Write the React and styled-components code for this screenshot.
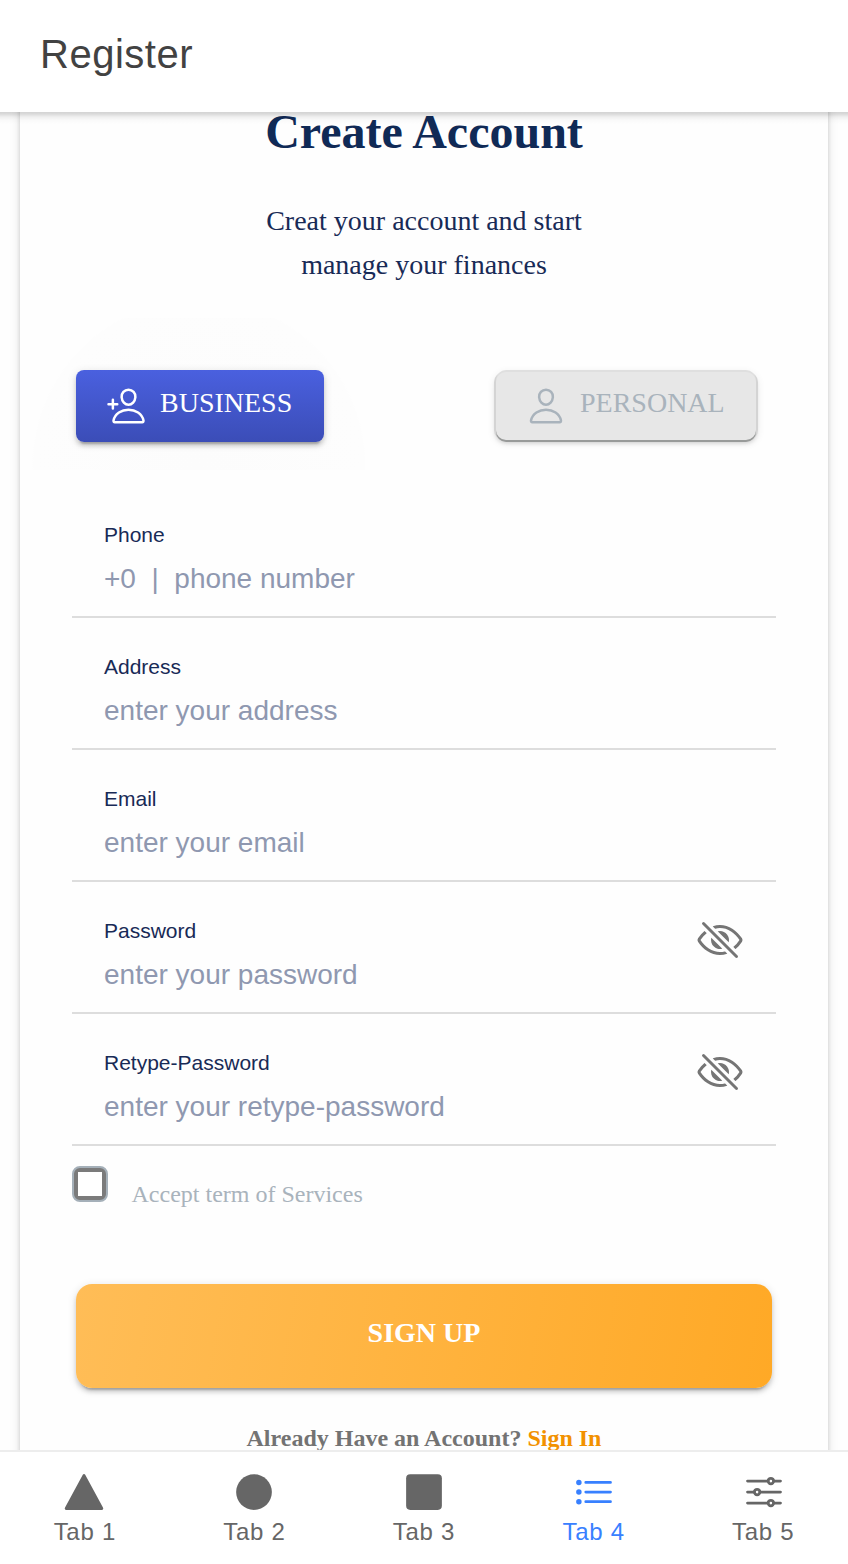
import React from 'react';
import styled, { createGlobalStyle } from 'styled-components';
import {
  IoPersonAddOutline, IoPersonOutline, IoEyeOffOutline, IoTriangle,
  IoEllipse, IoSquare, IoListOutline, IoOptionsOutline,
} from 'react-icons/io5';

const Global = createGlobalStyle`
  *, *::before, *::after { box-sizing: border-box; }
  html, body { margin: 0; padding: 0; background: #fff; }
`;

const sans = `"Liberation Sans", Arial, sans-serif`;
const serif = `"Liberation Serif", "Times New Roman", serif`;
const raised = `0 6px 2px -4px rgba(0,0,0,.2), 0 4px 4px 0 rgba(0,0,0,.14), 0 2px 10px 0 rgba(0,0,0,.12)`;
const edged = `0 -2px 0 0 #dfdfdf, 0 2px 0 0 #989a99, 2px 0 0 0 #d4d4d4, -2px 0 0 0 #d4d4d4, 0 3px 4px 0 rgba(0,0,0,.14), 0 2px 10px 0 rgba(0,0,0,.12)`;

const Page = styled.div`
  display: flex;
  flex-direction: column;
  width: 848px;
  height: 1564px;
  overflow: hidden;
  background: #fff;
  font-family: ${sans};
`;

const Header = styled.header`
  flex: none;
  display: flex;
  align-items: center;
  height: 112px;
  padding: 0 40px 4px;
  background: #fff;
`;

const Title = styled.h1`
  margin: 0;
  font-size: 40px;
  font-weight: 400;
  letter-spacing: 0.5px;
  color: #424242;
`;

const Content = styled.main`
  flex: 1;
  min-height: 0;
  overflow: hidden;
  background: #fefefe;
  position: relative;
  &::before {
    content: '';
    position: absolute;
    z-index: 1;
    top: 0;
    left: 0;
    right: 0;
    height: 12px;
    background: linear-gradient(rgba(0,0,0,.17), rgba(0,0,0,.14) 2px, rgba(0,0,0,.06) 5px, rgba(0,0,0,.02) 8px, transparent);
  }
`;

const Card = styled.section`
  height: 1500px;
  margin: -20px 20px 0;
  padding: 12px 52px 0;
  background: #fefefe;
  box-shadow: ${raised};
`;

const Heading = styled.h2`
  margin: 0;
  font: bold 48px/56px ${serif};
  text-align: center;
  color: #102a56;
`;

const Intro = styled.p`
  margin: 39px 0 0;
  font: 28px/44px ${serif};
  text-align: center;
  color: #182a56;
`;

const AccountTypes = styled.div`
  display: flex;
  justify-content: space-between;
  align-items: center;
  height: 152px;
  margin: 31px -52px 0;
  padding: 24px 72px 0 56px;
  background: radial-gradient(circle 167px at 179px 148px, #fcfcfc 0, #fdfdfd 99%, transparent 100%);
`;

const TypeButton = styled.button`
  display: flex;
  align-items: center;
  width: ${p => (p.$active ? 248 : 260)}px;
  height: ${p => (p.$active ? 72 : 68)}px;
  padding: 0 0 0 30px;
  border: 0;
  border-radius: ${p => (p.$active ? 8 : 10)}px;
  background: ${p => (p.$active ? 'linear-gradient(#4a60df, #3b4db7)' : '#e7e7e7')};
  box-shadow: ${p => (p.$active ? raised : edged)};
  color: ${p => (p.$active ? '#fff' : '#a9b3bc')};
  font: 28px/32px ${serif};

  svg {
    flex: none;
    width: 40px;
    height: 40px;
    margin-right: 14px;
  }
  span { margin-top: -6px; }
`;

const Field = styled.label`
  display: flex;
  align-items: flex-start;
  justify-content: space-between;
  height: 132px;
  padding: 36px 32px 0;
  border-bottom: 2px solid #dddddd;
  svg {
    width: 48px;
    height: 48px;
    color: #757575;
    margin-top: -2px;
  }
`;

const FieldText = styled.div`
  display: flex;
  flex-direction: column;
  flex: 1;
`;

const FieldName = styled.span`
  font-size: 21px;
  line-height: 26px;
  color: #182a56;
`;

const Input = styled.input`
  width: 100%;
  height: 36px;
  margin-top: 13px;
  padding: 0;
  border: 0;
  outline: 0;
  background: transparent;
  font: 28px/36px ${sans};
  &::placeholder { color: #8f98b0; opacity: 1; }
`;

const Fields = styled.div`
  padding-top: 16px;
`;

const Terms = styled.label`
  display: flex;
  align-items: flex-start;
  height: 138px;
  padding-top: 20px;
  font: 24px/28px ${serif};
  color: #a9b3bc;
  span { margin: 14px 0 0 23.5px; }
`;

const Checkbox = styled.i`
  width: 36px;
  height: 36px;
  border: 2px solid #a5b0b9;
  border-radius: 8px;
  background: #7b7b7b;
  padding: 4px;
  &::before {
    content: '';
    display: block;
    height: 24px;
    background: #fff;
  }
`;

const SignUp = styled.button`
  display: block;
  width: 696px;
  height: 104px;
  margin: 0 4px;
  padding: 0 0 7px;
  border: 0;
  border-radius: 16px;
  background: linear-gradient(100deg, #ffbd57, #ffa926);
  box-shadow: ${raised};
  color: #fff;
  font: bold 28px/32px ${serif};
`;

const Existing = styled.p`
  margin: 36px 0 0;
  font: bold 24px/28px ${serif};
  text-align: center;
  color: #737373;
  a { color: #f29100; }
`;

const TabBar = styled.nav`
  flex: none;
  display: flex;
  height: 114px;
  border-top: 2px solid #ededed;
  background: #fff;
`;

const Tab = styled.a`
  flex: 1;
  display: flex;
  flex-direction: column;
  align-items: center;
  padding-top: 18px;
  font-size: 24px;
  line-height: 28px;
  letter-spacing: 0.72px;
  color: ${p => (p.$active ? '#3880ff' : '#666')};
  svg {
    width: 44px;
    height: 44px;
    margin-bottom: 4px;
  }
  &:first-child svg { margin-left: -2px; }
  &:last-child svg { margin-right: -2px; }
`;

const fields = [
  { name: 'Phone', hint: '+0  |  phone number' },
  { name: 'Address', hint: 'enter your address' },
  { name: 'Email', hint: 'enter your email' },
  { name: 'Password', hint: 'enter your password', secret: true },
  { name: 'Retype-Password', hint: 'enter your retype-password', secret: true },
];

const tabs = [IoTriangle, IoEllipse, IoSquare, IoListOutline, IoOptionsOutline];

export default function App() {
  return (
    <Page>
      <Global />
      <Header><Title>Register</Title></Header>
      <Content>
        <Card>
          <Heading>Create Account</Heading>
          <Intro>Creat your account and start<br />manage your finances</Intro>
          <AccountTypes>
            <TypeButton $active><IoPersonAddOutline /><span>BUSINESS</span></TypeButton>
            <TypeButton><IoPersonOutline /><span>PERSONAL</span></TypeButton>
          </AccountTypes>
          <Fields>
            {fields.map(f => (
              <Field key={f.name}>
                <FieldText>
                  <FieldName>{f.name}</FieldName>
                  <Input placeholder={f.hint} type={f.secret ? 'password' : 'text'} />
                </FieldText>
                {f.secret && <IoEyeOffOutline />}
              </Field>
            ))}
          </Fields>
          <Terms><Checkbox /><span>Accept term of Services</span></Terms>
          <SignUp>SIGN UP</SignUp>
          <Existing>Already Have an Account? <a>Sign In</a></Existing>
        </Card>
      </Content>
      <TabBar>
        {tabs.map((Icon, i) => (
          <Tab key={i} $active={i === 3}><Icon />Tab {i + 1}</Tab>
        ))}
      </TabBar>
    </Page>
  );
}
